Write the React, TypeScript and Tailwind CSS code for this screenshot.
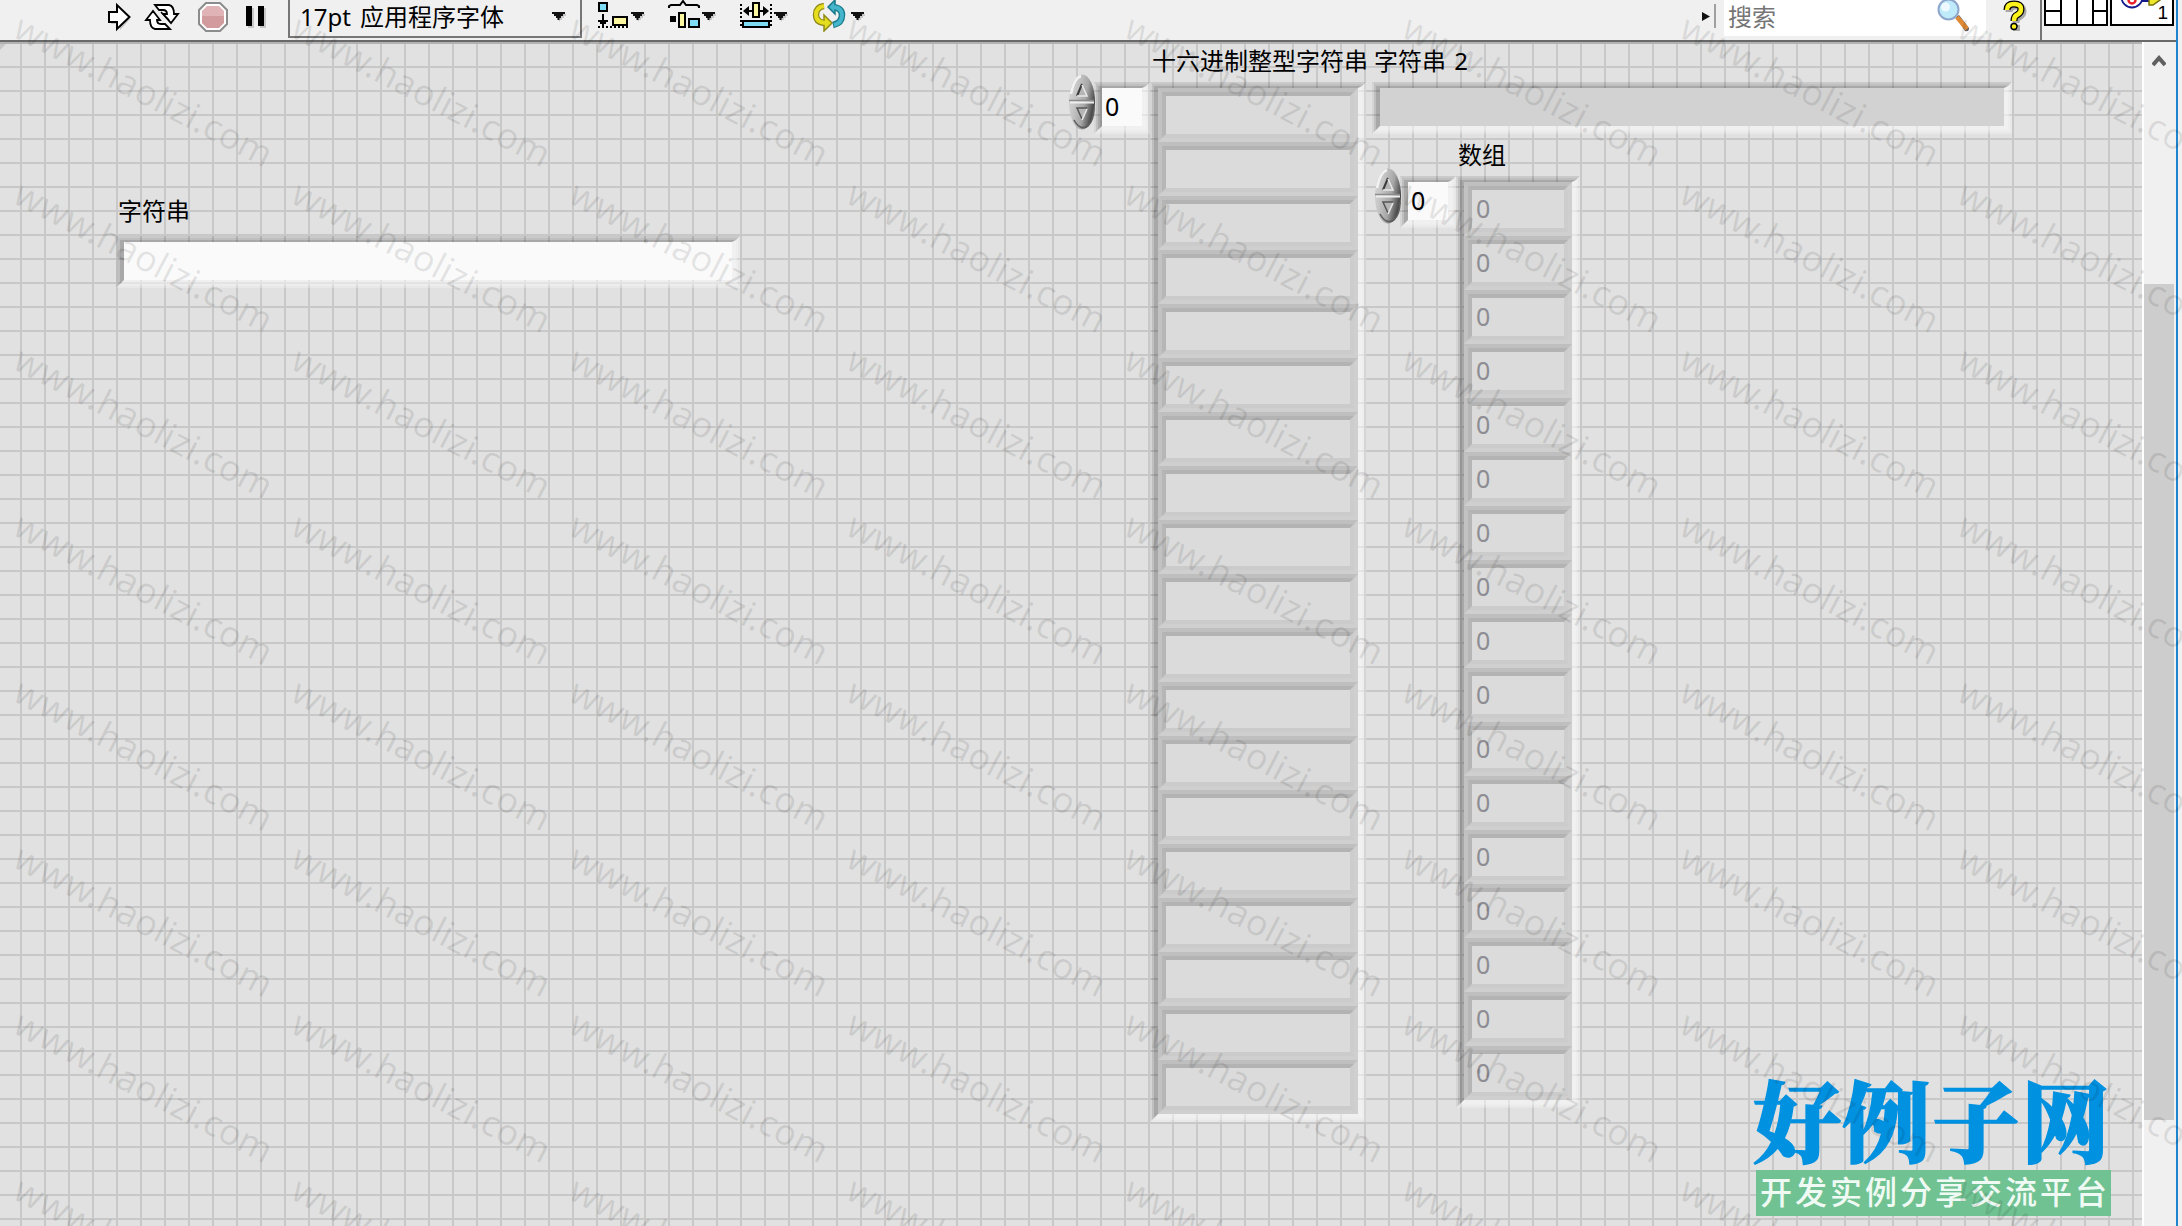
import type { ReactNode } from 'react'

const hexRows = Array.from({ length: 19 }, (_, i) => i)
const numberRows = Array.from({ length: 17 }, () => 0)
const watermarkRows = Array.from({ length: 8 }, (_, i) => i)
const watermarkCols = Array.from({ length: 8 }, (_, i) => i)

function DropArrow() {
  return (
    <svg className="block" width="14" height="10" viewBox="0 0 14 10">
      <path d="M2 2h12v2h-2v2h-2v2H8v2" fill="#c8c8c8" />
      <path d="M0 0h13v2h-2v2H9v2H7.500v2h-2V6H4V4H2V2H0z" fill="#111" />
    </svg>
  )
}

function RunIcons() {
  return (
    <svg className="block" width="164" height="36" viewBox="104 0 164 36">
      {/* run */}
      <path d="M111 14h9V8l10 11-10 11v-6h-9z" fill="#c4c4c4" />
      <path d="M109 12h8V5l12.500 12L117 29v-7h-8z" fill="#fff" stroke="#000" strokeWidth="2" />
      {/* run continuously */}
      <path d="M155 5h14q5 1 5 9h4l-7 9-8-9h4q0-4-4-4h-4z" fill="#fff" stroke="#000" strokeWidth="1.800" />
      <path d="M170 29h-15q-5-1-5-9h-4l7-9 7 9h-3q0 4 4 4h4z" fill="#fff" stroke="#000" strokeWidth="1.800" />
      <path d="M161 12l8 8" stroke="#000" strokeWidth="1.500" />
      {/* abort */}
      <path d="M206 3h14l7 7v14l-7 7h-14l-7-7V10z" fill="#fff" stroke="#8c8c8c" strokeWidth="2" />
      <path d="M207 6h12l5 5v6h-22v-6z" fill="#e0b4b7" />
      <path d="M202 16h22v7l-5 5h-12l-5-5z" fill="#d29b9e" />
      {/* pause */}
      <path d="M248 8h6v20h-6zM260 8h6v20h-6z" fill="#c8c8c8" />
      <path d="M246 6h6v20h-6zM258 6h6v20h-6z" fill="#000" />
    </svg>
  )
}

function AlignIcon() {
  return (
    <svg className="block" width="32" height="32" viewBox="598 0 32 32">
      <rect x="599" y="3" width="8" height="8" fill="#7fdcf5" stroke="#000" strokeWidth="2" />
      <path d="M602 14h2v6h4v2h-2v2h-2v3h-2v-3h-2v-2h-2v-2h4z" fill="#000" />
      <rect x="613" y="17" width="14" height="8" fill="#fbf6a0" stroke="#000" strokeWidth="2" />
      <path d="M598 27h30" stroke="#000" strokeWidth="2" strokeDasharray="2 2" />
    </svg>
  )
}

function DistributeIcon() {
  return (
    <svg className="block" width="34" height="32" viewBox="668 0 34 32">
      <path d="M669 8V6l2-1h9l3-4 3 4h11l2 1v2" fill="none" stroke="#000" strokeWidth="2" />
      <rect x="670" y="16" width="6" height="6" fill="#000" />
      <rect x="679" y="13" width="6" height="14" fill="#fbf6a0" stroke="#000" strokeWidth="2" />
      <rect x="689" y="19" width="10" height="8" fill="#7fdcf5" stroke="#000" strokeWidth="2" />
    </svg>
  )
}

function ResizeIcon() {
  return (
    <svg className="block" width="34" height="32" viewBox="740 0 34 32">
      <path d="M741 4v24M771 4v24" stroke="#000" strokeWidth="2" strokeDasharray="2 2" />
      <rect x="753" y="3" width="6" height="14" fill="#fbf6a0" stroke="#000" strokeWidth="2" />
      <path d="M743 11l6-5v4h3v2h-3v4zM769 11l-6-5v4h-3v2h3v4z" fill="#000" />
      <rect x="743" y="21" width="26" height="6" fill="#7fdcf5" stroke="#000" strokeWidth="2" />
    </svg>
  )
}

function ReorderIcon() {
  return (
    <svg className="block" width="34" height="32" viewBox="813 0 34 32">
      <path d="M825 6q-8 1-8 9 0 7 8 8" fill="none" stroke="#8f8a18" strokeWidth="6.500" />
      <path d="M825 15l8 8-8 8z" fill="#e6dd1e" stroke="#8f8a18" strokeWidth="1.500" />
      <path d="M825 6q-8 1-8 9 0 7 9 8" fill="none" stroke="#e6dd1e" strokeWidth="4" />
      <path d="M834 25q9-2 9-10 0-7-9-8" fill="none" stroke="#177a8c" strokeWidth="6.500" />
      <path d="M836 0l-7 7 7 7z" fill="#45b5cb" stroke="#177a8c" strokeWidth="1.500" />
      <path d="M835 25q8-2 8-10 0-7-8-8" fill="none" stroke="#45b5cb" strokeWidth="4" />
    </svg>
  )
}

function SearchIcon() {
  return (
    <svg className="block" width="36" height="34" viewBox="1936 0 36 34">
      <path d="M1956 17l3-2 10 13q0 4-4 3z" fill="#5a5a66" />
      <path d="M1957 17l10 12" stroke="#e08a34" strokeWidth="4.500" />
      <circle cx="1948.500" cy="9.500" r="10" fill="#bfeafa" stroke="#8fa6cc" strokeWidth="2" />
      <circle cx="1945.500" cy="7" r="4.500" fill="#eefaff" />
    </svg>
  )
}

function HelpIcon() {
  const mark = 'M2007 10q0-6 7-6t7 5q0 4-4 6-3 1-3 6'
  return (
    <svg className="block" width="26" height="34" viewBox="2002 0 26 34">
      <g transform="translate(2 2)" fill="none" stroke="#a8a8a8">
        <path d={mark} strokeWidth="7" />
        <rect x="2012" y="24" width="5" height="4" strokeWidth="2" />
      </g>
      <path d={mark} fill="none" stroke="#000" strokeWidth="7" />
      <path d={mark} fill="none" stroke="#fdf31c" strokeWidth="4.500" />
      <circle cx="2014" cy="26.500" r="3" fill="#fdf31c" stroke="#000" strokeWidth="1.500" />
    </svg>
  )
}

function ConnectorPane() {
  return (
    <svg className="block" width="64" height="26" viewBox="2044 0 64 26">
      <rect x="2045" y="-10" width="62" height="35" fill="#fff" stroke="#000" strokeWidth="2" />
      <path d="M2061 0v25M2077 0v25M2093 0v25M2045 11h16M2093 11h14" stroke="#000" strokeWidth="2" />
    </svg>
  )
}

function ViIcon() {
  return (
    <div className="relative">
      <svg className="block" width="64" height="26" viewBox="2110 0 64 26">
        <rect x="2111" y="-10" width="62" height="35" fill="#fff" stroke="#000" strokeWidth="2" />
        <circle cx="2132" cy="-3" r="10.500" fill="#fff" stroke="#141a8c" strokeWidth="1.800" />
        <circle cx="2132" cy="0" r="3.500" fill="#fff" stroke="#e8202c" strokeWidth="2.500" />
        <path d="M2141 1h8" stroke="#141a8c" strokeWidth="2" />
        <path d="M2149-4v9h4l7-5v-4z" fill="#f0e62a" stroke="#77720f" strokeWidth="1.500" />
      </svg>
      <span className="absolute top-[3px] right-[6px] font-['Liberation_Sans'] text-[19px] leading-5 text-black">1</span>
    </div>
  )
}

function Toolbar() {
  return (
    <header className="flex h-10 shrink-0 items-start bg-[#f0f0f0]">
      <div className="pl-[104px]">
        <RunIcons />
      </div>
      <div className="ml-[20px] flex h-[38px] w-[294px] items-start justify-between border-2 border-t-0 border-[#767676] pr-[14px] pl-[10px]">
        <span className="text-[24px] leading-[34px] [word-spacing:3px] whitespace-pre text-black">17pt 应用程序字体</span>
        <span className="pt-3">
          <DropArrow />
        </span>
      </div>
      <div className="ml-4 flex items-start">
        <AlignIcon />
        <span className="ml-px pt-3">
          <DropArrow />
        </span>
      </div>
      <div className="ml-[23px] flex items-start">
        <DistributeIcon />
        <span className="pt-3">
          <DropArrow />
        </span>
      </div>
      <div className="ml-6 flex items-start">
        <ResizeIcon />
        <span className="pt-3">
          <DropArrow />
        </span>
      </div>
      <div className="ml-6 flex items-start">
        <ReorderIcon />
        <span className="ml-[5px] pt-3">
          <DropArrow />
        </span>
      </div>
      <div className="ml-auto flex items-start">
        <svg className="mt-3 block" width="9" height="10" viewBox="0 0 9 10">
          <path d="M0 0l8 4.500L0 9z" fill="#111" />
        </svg>
        <div className="mt-1 ml-[3px] h-6 w-0.5 bg-[#a0a0a0]" />
        <div className="ml-2 flex h-9 w-[262px] items-start justify-between bg-white pr-[14px] pl-1">
          <span className="text-[24px] leading-[34px] text-[#757575]">搜索</span>
          <SearchIcon />
        </div>
        <div className="ml-4 w-[38px]">
          <HelpIcon />
        </div>
        <div className="flex h-10 items-start gap-0.5 border-l-2 border-[#767676] pr-0.5 pl-0.5">
          <ConnectorPane />
          <ViIcon />
        </div>
      </div>
    </header>
  )
}

// Sunken bevel: the grid shows through the three translucent rings
function Sunken({ className = '', children }: { className?: string; children?: ReactNode }) {
  return (
    <div className={`border-2 border-t-black/10 border-r-white/25 border-b-white/25 border-l-black/5 ${className}`}>
      <div className="h-full border-2 border-t-black/15 border-r-white/45 border-b-white/40 border-l-black/15">
        <div className="h-full border-4 border-t-2 border-t-black/25 border-r-white/55 border-b-white/50 border-l-black/25">
          {children}
        </div>
      </div>
    </div>
  )
}

function Cell({ children }: { children?: ReactNode }) {
  return (
    <div className="h-[54px] border-4 border-t-[#bfbfbf] border-r-[#cfcfcf] border-b-[#cfcfcf] border-l-[#c2c2c2]">
      <div className="h-full border-4 border-t-[#b3b3b3] border-r-[#cdcdcd] border-b-[#cbcbcb] border-l-[#b6b6b6] bg-[#dbdbdb] pl-1 text-[25px] leading-[37px] text-[#8d8d93]">
        {children}
      </div>
    </div>
  )
}

function Stepper() {
  return (
    <svg className="block" width="28" height="56" viewBox="0 0 28 56">
      <defs>
        <linearGradient id="metal" x1="0" y1="0" x2="1" y2="0.400">
          <stop offset="0" stopColor="#d8d8d8" />
          <stop offset="0.350" stopColor="#c6c6c6" />
          <stop offset="0.700" stopColor="#a6a6a6" />
          <stop offset="1" stopColor="#4c4c4c" />
        </linearGradient>
      </defs>
      <ellipse cx="14" cy="28" rx="13" ry="27.500" fill="url(#metal)" />
      <path d="M3 20Q6 4 13 2" stroke="#f2f2f2" strokeWidth="2.500" fill="none" />
      <path d="M6 46q6 11 14 6 6-6 6-18" stroke="#5e5e5e" strokeWidth="1.500" fill="none" />
      <path d="M1 26.500h25" stroke="#8b8b8b" strokeWidth="1.500" />
      <path d="M2 28.500h24" stroke="#eee" strokeWidth="2" />
      <path d="M9 22l5-12 5 12z" fill="#b5b5b5" />
      <path d="M9 22l5-12" stroke="#3c3c3c" strokeWidth="2" />
      <path d="M14 11l5 11H9" stroke="#e8e8e8" strokeWidth="1.500" fill="none" />
      <path d="M9 34h10l-5 11z" fill="#b5b5b5" />
      <path d="M14 45L9 34h10" stroke="#555" strokeWidth="1.500" fill="none" />
      <path d="M19 35l-5 11" stroke="#e8e8e8" strokeWidth="1.500" />
    </svg>
  )
}

function IndexControl() {
  return (
    <div className="flex items-start">
      <Stepper />
      <Sunken className="mt-2 -ml-0.5 h-[52px] w-[56px]">
        <div className="h-full bg-[#fafafa] pl-[3px] text-[25px] leading-[36px] text-black">0</div>
      </Sunken>
    </div>
  )
}

function Label({ children }: { children: ReactNode }) {
  return (
    <div className="pl-[2px] text-[24px] leading-[30px] [word-spacing:2px] whitespace-pre text-black">{children}</div>
  )
}

function FrontPanel() {
  return (
    <main className="relative flex-1 overflow-hidden border-t-2 border-[#b2b2b2] bg-[#e1e1e1] bg-[linear-gradient(to_right,#c8c8c8_2px,transparent_2px),linear-gradient(to_bottom,#c8c8c8_2px,transparent_2px)] bg-[length:24px_24px] bg-[position:20px_22px]">
      <svg className="block" width="6" height="8" viewBox="0 0 6 8">
        <path d="M0 0h6L0 6z" fill="#c8c8c8" />
      </svg>

      <div className="absolute top-[152px] left-[116px]">
        <Label>字符串</Label>
        <Sunken className="mt-[10px] h-[52px] w-[624px]">
          <div className="h-full bg-[#fafafa]" />
        </Sunken>
      </div>

      <div className="absolute top-[30px] left-[1068px]">
        <IndexControl />
      </div>
      <div className="absolute top-[2px] left-[1150px]">
        <Label>十六进制整型字符串</Label>
        <Sunken className="mt-[6px] w-[216px]">
          {hexRows.map((row) => (
            <Cell key={row} />
          ))}
        </Sunken>
      </div>

      <div className="absolute top-[2px] left-[1372px]">
        <Label>字符串 2</Label>
        <Sunken className="mt-[6px] h-[52px] w-[640px]">
          <div className="h-full bg-[#d2d2d2]" />
        </Sunken>
      </div>

      <div className="absolute top-[124px] left-[1374px]">
        <IndexControl />
      </div>
      <div className="absolute top-[96px] left-[1456px]">
        <Label>数组</Label>
        <Sunken className="mt-[6px] w-[124px]">
          {numberRows.map((value, i) => (
            <Cell key={i}>{value}</Cell>
          ))}
        </Sunken>
      </div>

      <div className="absolute top-[1026px] left-[1753px] w-[364px]">
        <div className="font-['Noto_Serif_CJK_SC','Noto_Sans_CJK_SC',sans-serif] text-[88px] leading-[94px] font-black tracking-[1.500px] whitespace-nowrap text-[#0091e0] [-webkit-text-stroke:1.500px_#0091e0]">
          好例子网
        </div>
        <div className="mt-1.5 ml-[3px] h-[46px] w-[355px] bg-[#70c292] pl-[4px] text-[32px] leading-[43px] font-medium tracking-[3px] whitespace-nowrap text-[#f0faf4]">
          开发实例分享交流平台
        </div>
      </div>
    </main>
  )
}

function ScrollBar() {
  return (
    <div className="flex w-[34px] shrink-0 flex-col border-l-2 border-white bg-[#f0f0f0]">
      <svg className="mt-3 ml-2 block" width="14" height="14" viewBox="0 0 14 14">
        <path d="M1 11l6-7 6 7" fill="none" stroke="#606060" strokeWidth="4" />
      </svg>
      <div className="mt-[216px] h-[836px] w-[30px] bg-[#cdcdcd]" />
    </div>
  )
}

function Watermark() {
  return (
    <svg className="pointer-events-none absolute inset-0" width="2182" height="1226" viewBox="0 0 2182 1226">
      {watermarkRows.map((row) =>
        watermarkCols.map((col) => (
          <text
            key={`${row}-${col}`}
            transform={`translate(${11 + col * 277.7} ${36 + row * 166}) rotate(27.5)`}
            fontFamily="'Noto Sans', sans-serif"
            fontSize="36"
            fontWeight="400"
            textLength="286"
            fill="#000"
            fillOpacity="0.09"
          >
            www.haolizi.com
          </text>
        ))
      )}
    </svg>
  )
}

export default function App() {
  return (
    <div className="relative flex h-[1226px] w-[2182px] overflow-hidden bg-[#f0f0f0] font-['Noto_Sans','Noto_Sans_CJK_SC',sans-serif]">
      <div className="flex w-[2178px] flex-col border-r-2 border-[#1e84d0]">
        <Toolbar />
        <div className="h-0.5 shrink-0 bg-[#696969]" />
        <div className="flex min-h-0 flex-1">
          <FrontPanel />
          <ScrollBar />
        </div>
      </div>
      <Watermark />
    </div>
  )
}
